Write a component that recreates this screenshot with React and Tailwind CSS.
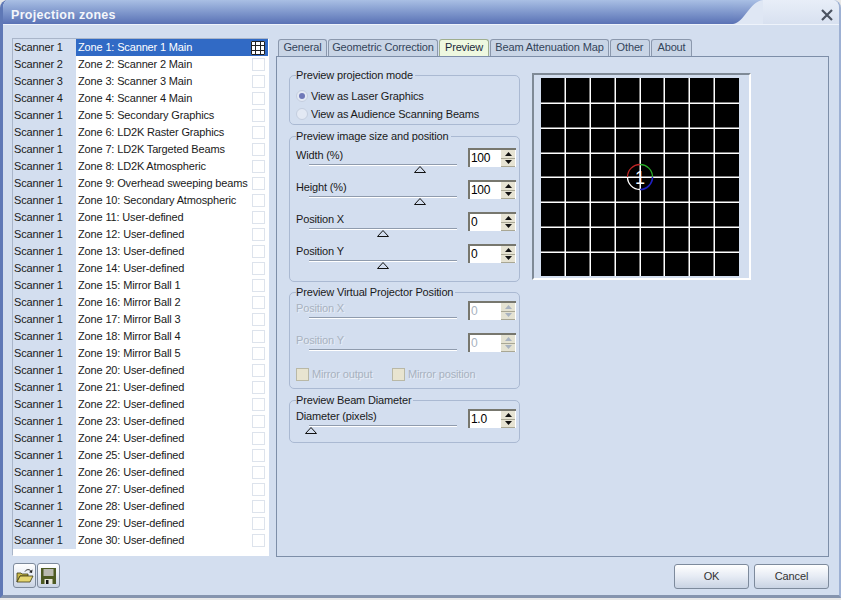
const zones = [
  ["Scanner 1","Zone 1: Scanner 1 Main"],["Scanner 2","Zone 2: Scanner 2 Main"],["Scanner 3","Zone 3: Scanner 3 Main"],["Scanner 4","Zone 4: Scanner 4 Main"],
  ["Scanner 1","Zone 5: Secondary Graphics"],["Scanner 1","Zone 6: LD2K Raster Graphics"],["Scanner 1","Zone 7: LD2K Targeted Beams"],["Scanner 1","Zone 8: LD2K Atmospheric"],
  ["Scanner 1","Zone 9: Overhead sweeping beams"],["Scanner 1","Zone 10: Secondary Atmospheric"],["Scanner 1","Zone 11: User-defined"],["Scanner 1","Zone 12: User-defined"],
  ["Scanner 1","Zone 13: User-defined"],["Scanner 1","Zone 14: User-defined"],["Scanner 1","Zone 15: Mirror Ball 1"],["Scanner 1","Zone 16: Mirror Ball 2"],
  ["Scanner 1","Zone 17: Mirror Ball 3"],["Scanner 1","Zone 18: Mirror Ball 4"],["Scanner 1","Zone 19: Mirror Ball 5"],["Scanner 1","Zone 20: User-defined"],
  ["Scanner 1","Zone 21: User-defined"],["Scanner 1","Zone 22: User-defined"],["Scanner 1","Zone 23: User-defined"],["Scanner 1","Zone 24: User-defined"],
  ["Scanner 1","Zone 25: User-defined"],["Scanner 1","Zone 26: User-defined"],["Scanner 1","Zone 27: User-defined"],["Scanner 1","Zone 28: User-defined"],
  ["Scanner 1","Zone 29: User-defined"],["Scanner 1","Zone 30: User-defined"],
];
const tabs = [["General",49],["Geometric Correction",110],["Preview",50],["Beam Attenuation Map",119],["Other",40],["About",41]];

function Spinner({ value, disabled }) {
  const btn = "flex-1 flex items-center justify-center border-b border-[#a9a794] " + (disabled ? "bg-[#e4e2d2]" : "bg-[#e6e3d3]");
  return (
    <div className="w-[48px] h-[19px] flex bg-white border-t-2 border-l-2 border-t-[#77776e] border-l-[#77776e] shrink-0">
      <div className={"flex-1 pl-[1px] leading-[17px] text-[12px] tracking-[-0.3px] " + (disabled ? "text-[#a8b2c0]" : "text-black")}>{value}</div>
      <div className="w-[14px] mr-[1px] flex flex-col">
        <div className={btn}>
          <svg width="7" height="4" viewBox="0 0 7 4"><path d="M3.5 0 7 4H0z" fill={disabled ? "#a8b2c0" : "#111"} /></svg>
        </div>
        <div className={btn}>
          <svg width="7" height="4" viewBox="0 0 7 4"><path d="M0 0h7L3.5 4z" fill={disabled ? "#a8b2c0" : "#111"} /></svg>
        </div>
      </div>
    </div>
  );
}

function SliderRow({ label, value, pos, disabled, thumb = true }) {
  return (
    <div className="h-[32px] flex items-start">
      <div className="w-[172px] shrink-0 relative h-[32px]">
        <div className={"leading-[14px] " + (disabled ? "text-[#a8b2c0] [text-shadow:1px_1px_0_#e9eef7]" : "text-[#1a1a1a]")}>{label}</div>
        <div className="absolute left-[13px] top-[16px] w-[148px] h-[1px] bg-[#8f9bad] border-b border-white box-content" />
        {thumb && (
          <svg className="absolute top-[18px]" style={{ left: pos }} width="12" height="7" viewBox="0 0 12 7">
            <path d="M6 .5 11.5 6.5H.5z" fill="#d3deef" stroke="#111" />
          </svg>
        )}
      </div>
      <Spinner value={value} disabled={disabled} />
    </div>
  );
}

function Group({ title, className, children }) {
  return (
    <fieldset className={"w-[231px] border border-[#aab9d2] rounded-[5px] pl-[6px] pr-[3px] " + className}>
      <legend className="px-0 pr-[2px] leading-[16px] text-[#1a1a1a]">{title}</legend>
      {children}
    </fieldset>
  );
}

function Radio({ label, checked }) {
  return (
    <div className="h-[18px] flex items-center gap-[3px] text-[#1a1a1a]">
      <span className="w-[12px] h-[12px] rounded-full bg-[#e3e9f4] border border-[#c4cedf] flex items-center justify-center">
        {checked && <span className="w-[6px] h-[6px] rounded-full bg-[#6f78b8]" />}
      </span>
      {label}
    </div>
  );
}

function Check({ label, className }) {
  return (
    <div className={"flex items-center gap-[2px] text-[#a8b2c0] [text-shadow:1px_1px_0_#e9eef7] " + className}>
      <span className="w-[13px] h-[13px] bg-[#e8e4d0] border border-[#b9b8a6]" />
      <span className="ml-[1px]">{label}</span>
    </div>
  );
}

function Preview() {
  const xs = [24, 49, 74, 99, 123, 148, 173];
  const ys = [25, 50, 75, 99, 124, 149, 174];
  return (
    <div className="w-[219px] h-[207px] border-t-2 border-l-2 border-t-[#7f8a96] border-l-[#7f8a96] border-r-2 border-b-2 border-r-white border-b-white pl-[7px] pt-[3px] shrink-0">
      <svg width="198" height="198" viewBox="0 0 198 198" className="block bg-black">
        {xs.map((x) => <rect key={x} x={x - 0.5} y="0" width="1.5" height="198" fill="#fff" />)}
        {ys.map((y) => <rect key={y} x="0" y={y - 0.5} width="198" height="1.5" fill="#fff" />)}
        <path d="M86.5 99A12.5 12.5 0 0 1 99 86.5" fill="none" stroke="#c02525" strokeWidth="1.3" />
        <path d="M99 86.5A12.5 12.5 0 0 1 111.5 99" fill="none" stroke="#28b028" strokeWidth="1.3" />
        <path d="M111.5 99A12.5 12.5 0 0 1 99 111.5" fill="none" stroke="#2020c0" strokeWidth="1.6" />
        <path d="M99 111.5A12.5 12.5 0 0 1 86.5 99" fill="none" stroke="#fff" strokeWidth="1.3" />
        <text x="99" y="106" textAnchor="middle" fill="#fff" fontSize="18" fontFamily="'Liberation Sans',sans-serif">1</text>
      </svg>
    </div>
  );
}

function GridMark() {
  return (
    <svg width="14" height="14" viewBox="0 0 14 14" className="bg-white shrink-0">
      <path d="M.5.5h13v13H.5zM4.5.5v13M9.5.5v13M.5 4.5h13M.5 9.5h13" fill="none" stroke="#222" />
    </svg>
  );
}

function Folder() {
  return (
    <svg width="18" height="17" viewBox="0 0 18 17">
      <path d="M1 6h4l1 1h6v2H4L1 15z" fill="#c9b84a" stroke="#3c3b14" strokeWidth=".8" />
      <path d="M4 9h13l-3 6H1z" fill="#e6d670" stroke="#3c3b14" strokeWidth=".8" />
      <path d="M9 4.5C10.5 2 14 2 15 4.5" fill="none" stroke="#222" />
      <path d="M16.5 2.5 16 6l-3-.8z" fill="#222" />
    </svg>
  );
}

function Floppy() {
  return (
    <svg width="15" height="16" viewBox="0 0 15 16">
      <path d="M0 0h15v16H0z" fill="#4d5a22" />
      <path d="M2.5 1h10v7h-10z" fill="#b9b9b0" />
      <path d="M3.5 11h8v5h-8z" fill="#e6e6d8" />
      <path d="M5 12h2.5v4H5z" fill="#111" />
    </svg>
  );
}

const btnCls = "flex items-center justify-center rounded-[3px] border border-[#7d8a9c] bg-gradient-to-b from-white via-[#e6ebf4] to-[#c9d3e3]";

export default function App() {
  return (
    <div className="w-[841px] h-[600px] overflow-hidden bg-[#e8e8e8] text-[11px] tracking-[-0.15px] [font-family:'Liberation_Sans',sans-serif]">
      <div className="h-[598px] flex flex-col rounded-t-[8px] overflow-hidden bg-[#d3deef] border-l-[3px] border-l-[#5f78b6] border-r-[2px] border-r-[#9db0d3] border-b-[3px] border-b-[#8594ae]">
        {/* title bar */}
        <div className="h-[25px] shrink-0 flex border-b border-b-[#eef3fb]">
          <div className="flex-1 bg-gradient-to-b from-[#a9bfe4] to-[#5a72b5] pl-[8px] leading-[30px] text-[12.5px] font-bold tracking-[0.3px] text-[#f4f6fb]">
            Projection zones
          </div>
          <svg width="30" height="24" viewBox="0 0 30 24" className="shrink-0 block">
            <defs>
              <linearGradient id="tg" x1="0" x2="0" y1="0" y2="1"><stop offset="0" stopColor="#a9bfe4" /><stop offset="1" stopColor="#5a72b5" /></linearGradient>
            </defs>
            <rect width="30" height="24" fill="#dfe7f4" />
            <path d="M0 0H30C16 2 12 22 0 24z" fill="url(#tg)" />
          </svg>
          <div className="w-[76px] bg-gradient-to-b from-[#e8eef8] to-[#d8e1f0] flex items-center justify-end">
            <svg width="14" height="14" viewBox="0 0 14 14" className="mt-[5px] mr-[5px]"><path d="M2 2 12 12M12 2 2 12" stroke="#4a5260" strokeWidth="2.2" /></svg>
          </div>
        </div>

        {/* body */}
        <div className="flex-1 flex gap-[7px] pl-[9px] pr-[10px] pt-[13px]">
          {/* left */}
          <div className="w-[257px] shrink-0 flex flex-col">
            <div className="h-[518px] flex border border-[#a9b5c9] border-r-white border-b-white bg-white">
              <div className="w-[63px] shrink-0 h-[510px] bg-[#d3deef]">
                {zones.map(([s], i) => (
                  <div key={i} className="h-[17px] pl-[1px] leading-[17px] text-[#1a1a1a]">{s}</div>
                ))}
              </div>
              <div className="flex-1 min-w-0">
                {zones.map(([, z], i) => (
                  <div key={i} className={"h-[17px] flex items-center pl-[2px] pr-[3px] leading-[17px] whitespace-nowrap " + (i === 0 ? "bg-[#316ac5] text-white" : "text-[#1a1a1a]")}>
                    <span className="flex-1 min-w-0">{z}</span>
                    {i === 0 ? <GridMark /> : <span className="w-[13px] h-[13px] shrink-0 border border-[#dde3ec]" />}
                  </div>
                ))}
              </div>
            </div>
            <div className="flex mt-[7px] gap-[1px] pl-[1px]">
              <button className={btnCls + " w-[23px] h-[25px]"}><Folder /></button>
              <button className={btnCls + " w-[23px] h-[25px]"}><Floppy /></button>
            </div>
          </div>

          {/* right */}
          <div className="w-[553px] shrink-0 flex flex-col">
            <div className="h-[17px] mt-[1px] flex pl-[2px] gap-[1px] items-end">
              {tabs.map(([t, w]) => (
                <div key={t} style={{ width: w }} className={"h-[17px] text-center leading-[15px] rounded-t-[3px] border border-b-0 border-[#8b98ad] whitespace-nowrap " + (t === "Preview" ? "bg-[#eef8e0] text-[#1a2a3a] border-[#9fae8f]" : "bg-[#c9d5e6] text-[#33445a]")}>{t}</div>
              ))}
            </div>
            <div className="h-[501px] border border-[#7d8ea8] flex pl-[12px] pt-[10px] gap-[12px]">
              <div className="flex flex-col">
                <Group title="Preview projection mode" className="h-[58px]">
                  <div className="mt-[4px]">
                    <Radio label="View as Laser Graphics" checked />
                    <Radio label="View as Audience Scanning Beams" />
                  </div>
                </Group>
                <Group title="Preview image size and position" className="h-[154px] mt-[3px]">
                  <div className="mt-[4px]">
                    <SliderRow label="Width (%)" value="100" pos={118} />
                    <SliderRow label="Height (%)" value="100" pos={118} />
                    <SliderRow label="Position X" value="0" pos={81} />
                    <SliderRow label="Position Y" value="0" pos={81} />
                  </div>
                </Group>
                <Group title="Preview Virtual Projector Position" className="h-[105px] mt-[2px]">
                  <div className="mt-[1px]">
                    <SliderRow label="Position X" value="0" disabled thumb={false} />
                    <SliderRow label="Position Y" value="0" disabled thumb={false} />
                    <div className="flex mt-[1px]">
                      <Check label="Mirror output" className="w-[96px]" />
                      <Check label="Mirror position" />
                    </div>
                  </div>
                </Group>
                <Group title="Preview Beam Diameter" className="h-[51px] mt-[3px]">
                  <div className="mt-[1px]">
                    <SliderRow label="Diameter (pixels)" value="1.0" pos={9} />
                  </div>
                </Group>
              </div>
              <div className="mt-[6px]"><Preview /></div>
            </div>
            <div className="flex justify-end gap-[5px] mt-[7px]">
              <button className={btnCls + " w-[75px] h-[25px] text-[#333]"}>OK</button>
              <button className={btnCls + " w-[75px] h-[25px] text-[#333]"}>Cancel</button>
            </div>
          </div>
        </div>
      </div>
    </div>
  );
}
